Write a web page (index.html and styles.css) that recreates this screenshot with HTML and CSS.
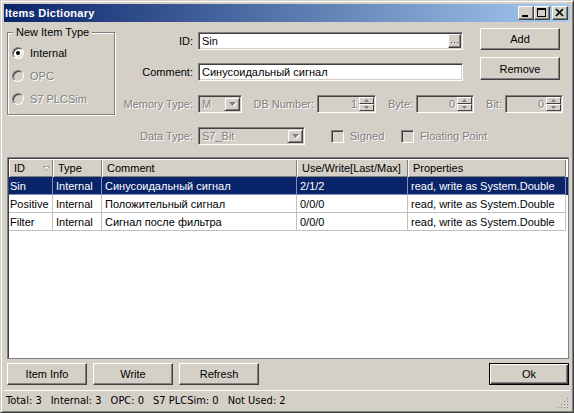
FILE: index.html
```html
<!DOCTYPE html>
<html lang="ru">
<head>
<meta charset="UTF-8">
<title>Items Dictionary</title>
<link rel="stylesheet" href="styles.css">
</head>
<body>

<div class="window">
  <div class="titlebar">
    <span class="title">Items Dictionary</span>
    <div class="caption-buttons">
      <span class="cap-btn"><svg width="12" height="10" viewBox="0 0 12 10"><rect x="2" y="7" width="6" height="2"/></svg></span>
      <span class="cap-btn"><svg width="12" height="10" viewBox="0 0 12 10"><rect x="1" y="0" width="9" height="2"/><rect x="1" y="0" width="1" height="9"/><rect x="9" y="0" width="1" height="9"/><rect x="1" y="8" width="9" height="1"/></svg></span>
      <span class="cap-btn close"><svg width="12" height="10" viewBox="0 0 12 10"><path d="M2 1 L9 8 M9 1 L2 8" stroke="#000" stroke-width="1.7"/></svg></span>
    </div>
  </div>

  <div class="content">
    <div class="top">
      <fieldset class="group">
        <legend>New Item Type</legend>
        <div class="radio-row"><span class="radio checked"></span>Internal</div>
        <div class="radio-row disabled"><span class="radio"></span>OPC</div>
        <div class="radio-row disabled"><span class="radio"></span>S7 PLCSim</div>
      </fieldset>

      <div class="fields">
        <div class="fields-top">
          <div class="field-col">
            <div class="row row-id">
              <span class="lbl">ID:</span>
              <div class="input wide"><span class="val">Sin</span><span class="ellipsis"><svg width="7" height="1" viewBox="0 0 7 1"><rect x="0" y="0" width="1" height="1"/><rect x="3" y="0" width="1" height="1"/><rect x="6" y="0" width="1" height="1"/></svg></span></div>
            </div>
            <div class="row row-comment">
              <span class="lbl">Comment:</span>
              <div class="input wide"><span class="val">Синусоидальный сигнал</span></div>
            </div>
          </div>
          <div class="btn-col">
            <button class="btn">Add</button>
            <button class="btn btn-remove">Remove</button>
          </div>
        </div>

        <div class="row row-mem">
          <span class="lbl off">Memory Type:</span>
          <div class="input off combo combo-mem"><span class="val">M</span><span class="drop"><svg width="7" height="4" viewBox="0 0 7 4"><polygon points="0,0 7,0 3.5,4"/></svg></span></div>
          <span class="lbl off lbl-db">DB Number:</span>
          <div class="input off spin spin-db"><span class="val num">1</span><span class="spin-btns"><span class="sb"><svg width="5" height="3" viewBox="0 0 5 3"><polygon points="2.5,0 5,3 0,3"/></svg></span><span class="sb"><svg width="5" height="3" viewBox="0 0 5 3"><polygon points="0,0 5,0 2.5,3"/></svg></span></span></div>
          <span class="lbl off lbl-byte">Byte:</span>
          <div class="input off spin"><span class="val num">0</span><span class="spin-btns"><span class="sb"><svg width="5" height="3" viewBox="0 0 5 3"><polygon points="2.5,0 5,3 0,3"/></svg></span><span class="sb"><svg width="5" height="3" viewBox="0 0 5 3"><polygon points="0,0 5,0 2.5,3"/></svg></span></span></div>
          <span class="lbl off lbl-bit">Bit:</span>
          <div class="input off spin"><span class="val num">0</span><span class="spin-btns"><span class="sb"><svg width="5" height="3" viewBox="0 0 5 3"><polygon points="2.5,0 5,3 0,3"/></svg></span><span class="sb"><svg width="5" height="3" viewBox="0 0 5 3"><polygon points="0,0 5,0 2.5,3"/></svg></span></span></div>
        </div>
      </div>
    </div>

    <div class="row row-type">
      <span class="lbl off lbl-type">Data Type:</span>
      <div class="input off combo combo-type"><span class="val">S7_Bit</span><span class="drop"><svg width="7" height="4" viewBox="0 0 7 4"><polygon points="0,0 7,0 3.5,4"/></svg></span></div>
      <div class="check off check-signed"><span class="box"></span>Signed</div>
      <div class="check off"><span class="box"></span>Floating Point</div>
    </div>

    <!-- items list -->
    <div class="list">
      <div class="list-head">
        <div class="hcell">ID<svg class="sort" width="7" height="5" viewBox="0 0 7 5"><polygon points="0.5,0.5 6.5,0.5 3.5,4.5" fill="#fff" stroke="#a0a0a0"/></svg></div>
        <div class="hcell">Type</div>
        <div class="hcell">Comment</div>
        <div class="hcell">Use/Write[Last/Max]</div>
        <div class="hcell">Properties</div>
      </div>
      <div class="list-row selected">
        <div class="cell first">Sin</div>
        <div class="cell">Internal</div>
        <div class="cell">Синусоидальный сигнал</div>
        <div class="cell">2/1/2</div>
        <div class="cell">read, write as System.Double</div>
      </div>
      <div class="list-row">
        <div class="cell first">Positive</div>
        <div class="cell">Internal</div>
        <div class="cell">Положительный сигнал</div>
        <div class="cell">0/0/0</div>
        <div class="cell">read, write as System.Double</div>
      </div>
      <div class="list-row">
        <div class="cell first">Filter</div>
        <div class="cell">Internal</div>
        <div class="cell">Сигнал после фильтра</div>
        <div class="cell">0/0/0</div>
        <div class="cell">read, write as System.Double</div>
      </div>
    </div>

    <div class="bottom-buttons">
      <button class="btn">Item Info</button>
      <button class="btn">Write</button>
      <button class="btn">Refresh</button>
      <button class="btn btn-ok">Ok</button>
    </div>
  </div>

  <div class="statusbar">
    <div class="status-text">
      <span>Total: 3</span>
      <span>Internal: 3</span>
      <span>OPC: 0</span>
      <span>S7 PLCSim: 0</span>
      <span>Not Used: 2</span>
    </div>
    <svg class="grip" width="11" height="11" viewBox="0 0 11 11">
      <g fill="#808080"><rect x="9" y="1" width="1" height="1"/><rect x="6" y="4" width="1" height="1"/><rect x="9" y="4" width="1" height="1"/><rect x="3" y="7" width="1" height="1"/><rect x="6" y="7" width="1" height="1"/><rect x="9" y="7" width="1" height="1"/><rect x="0" y="10" width="1" height="1"/><rect x="3" y="10" width="1" height="1"/><rect x="6" y="10" width="1" height="1"/><rect x="9" y="10" width="1" height="1"/></g>
    </svg>
  </div>
</div>

</body>
</html>
```

FILE: styles.css
```css
* { margin: 0; padding: 0; box-sizing: border-box; }
body { font-family: "Liberation Sans", Arial, sans-serif; font-size: 11px; color: #000; background: #d4d0c8; }

.window { width: 574px; height: 413px; display: flex; flex-direction: column; padding: 3px; background: #d4d0c8; border: 1px solid; border-color: #d4d0c8 #404040 #404040 #d4d0c8; box-shadow: inset 1px 1px #fff, inset -1px -1px #808080; }

/* title bar */
.titlebar { height: 18px; display: flex; align-items: center; padding-left: 1px; background: linear-gradient(to right, #0a246a, #a6caf0); }
.title { color: #fff; font-weight: bold; font-size: 11px; letter-spacing: 0.25px; }
.caption-buttons { margin-left: auto; display: flex; padding-right: 2px; }
.cap-btn { width: 16px; height: 14px; display: flex; align-items: center; justify-content: center; background: #d4d0c8; border: 1px solid; border-color: #fff #404040 #404040 #fff; box-shadow: inset -1px -1px #808080; }
.cap-btn.close { margin-left: 2px; }

.content { flex: 1; display: flex; flex-direction: column; padding: 4px 1px 0 3px; }
.top { display: flex; height: 89px; }

/* group box */
.group { width: 108px; height: 89px; flex-shrink: 0; border: 1px solid #808080; box-shadow: 1px 1px 0 #fff, inset 1px 1px 0 #fff; padding: 2px 0 0 4px; }
.group legend { margin-left: 1px; padding: 0 3px; line-height: 13px; background: #d4d0c8; }
.radio-row { height: 23px; display: flex; align-items: center; }
.radio { width: 12px; height: 12px; margin-right: 6px; border-radius: 50%; background: #fff; border: 1px solid; border-color: #808080 #fff #fff #808080; box-shadow: inset 1px 1px #404040, inset -1px -1px #d4d0c8; display: flex; align-items: center; justify-content: center; }
.radio.checked::after { content: ""; width: 4px; height: 4px; border-radius: 50%; background: #000; }
.disabled, .off { color: #808080; text-shadow: 1px 1px 0 #fff; }
.disabled .radio { background: #d4d0c8; }

/* fields */
.fields { flex: 1; margin-top: 2px; display: flex; flex-direction: column; }
.fields-top { display: flex; }
.field-col { width: 348px; }
.row { height: 18px; display: flex; align-items: center; }
.row > * { flex-shrink: 0; }
.row-id { margin-top: 4px; }
.row-comment { margin-top: 13px; }
.lbl { width: 78px; margin-right: 5px; text-align: right; white-space: nowrap; }

.input { height: 18px; display: flex; align-items: center; background: #fff; border: 1px solid; border-color: #808080 #fff #fff #808080; box-shadow: inset 1px 1px #404040, inset -1px -1px #d4d0c8; padding: 2px 1px 2px 2px; }
.input.off { background: #d4d0c8; }
.input .val { flex: 1; padding-left: 1px; white-space: nowrap; overflow: hidden; }
.input .num { text-align: right; padding-right: 2px; }
.wide { width: 265px; }
.ellipsis { width: 13px; height: 14px; display: flex; align-items: center; justify-content: center; padding-top: 3px; background: #d4d0c8; border: 1px solid; border-color: #fff #404040 #404040 #fff; box-shadow: inset -1px -1px #808080; }
.ellipsis svg { fill: #404040; }

.btn-col { margin-left: 17px; width: 80px; display: flex; flex-direction: column; }
.btn { font-family: "Liberation Sans", Arial, sans-serif; font-size: 11px; color: #000; width: 80px; height: 22px; background: #d4d0c8; border: 1px solid; border-color: #fff #404040 #404040 #fff; box-shadow: inset -1px -1px #808080; }
.btn-remove { margin-top: 7px; height: 23px; }

.row-mem { margin-top: 14px; }
.combo .drop { width: 16px; height: 14px; display: flex; align-items: center; justify-content: center; background: #d4d0c8; border: 1px solid; border-color: #d4d0c8 #404040 #404040 #d4d0c8; box-shadow: inset 1px 1px #fff, inset -1px -1px #808080; }
.combo .drop svg { fill: #808080; filter: drop-shadow(1px 1px 0 #fff); }
.combo-mem { width: 44px; }
.lbl-db { width: 62px; margin-left: 10px; margin-right: 3px; }
.lbl-byte { width: 25px; margin-left: 12px; margin-right: 3px; }
.lbl-bit { width: 16px; margin-left: 12px; margin-right: 3px; }
.spin { width: 58px; }
.spin-db { width: 59px; }
.spin-btns { width: 15px; height: 14px; display: flex; flex-direction: column; }
.sb { flex: 1; display: flex; align-items: center; justify-content: center; background: #d4d0c8; border: 1px solid; border-color: #fff #404040 #404040 #fff; }
.sb svg { fill: #808080; }

.row-type { margin-top: 12px; }
.lbl-type { width: 186px; }
.combo-type { width: 107px; }
.check { display: flex; align-items: center; white-space: nowrap; }
.check-signed { width: 70px; margin-left: 26px; }
.check .box { width: 13px; height: 13px; margin-right: 6px; background: #d4d0c8; border: 1px solid; border-color: #808080 #fff #fff #808080; box-shadow: inset 1px 1px #404040, inset -1px -1px #d4d0c8; }

/* list view */
.list { margin-top: 12px; height: 202px; background: #fff; border: 1px solid #808080; box-shadow: inset 1px 1px #404040; padding: 1px 0 0 1px; }
.list-head, .list-row { display: grid; grid-template-columns: 44px 49px 195px 111px 158px; }
.list-head { height: 18px; }
.hcell { display: flex; align-items: center; padding-left: 5px; background: #d4d0c8; box-shadow: inset 1px 1px #fff, inset -1px -1px #808080; white-space: nowrap; }
.sort { margin-left: auto; margin-right: 3px; }
.list-row { height: 18px; }
.cell { display: flex; align-items: center; padding-left: 3px; border-right: 1px solid #c0c0c0; border-bottom: 1px solid #c0c0c0; white-space: nowrap; overflow: hidden; }
.cell.first { padding-left: 1px; }
.list-row.selected { background: #0a246a; color: #fff; }
.list-row.selected .cell { border-color: #8090b8; }

.bottom-buttons { margin-top: 4px; display: flex; }
.bottom-buttons .btn { margin-right: 6px; }
.bottom-buttons .btn.btn-ok { margin-left: auto; margin-right: 0; border-color: #000; box-shadow: inset 1px 1px #fff, inset -1px -1px #404040, inset -2px -2px #808080; }

/* status bar */
.statusbar { height: 19px; margin-top: 2px; display: flex; align-items: center; padding: 0 1px 0 2px; border-top: 1px solid #fff; }
.status-text { display: flex; gap: 9px; font-family: "DejaVu Sans Condensed", "Liberation Sans", sans-serif; font-size: 11px; white-space: nowrap; }
.grip { margin-left: auto; align-self: flex-end; margin-bottom: 1px; }
```
